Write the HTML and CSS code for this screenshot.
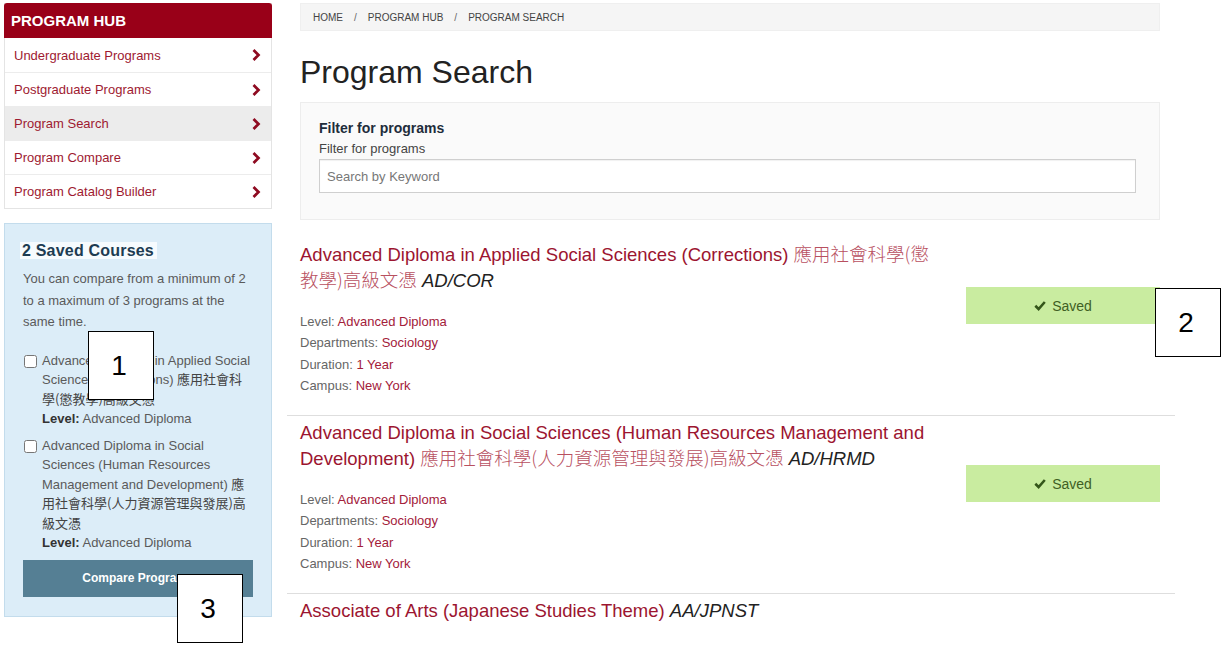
FILE: index.html
```html
<!DOCTYPE html>
<html lang="en">
<head>
<meta charset="utf-8">
<title>Program Search</title>
<link rel="stylesheet" href="styles.css">
</head>
<body>
<div class="page">
  <aside class="sidebar">
    <nav class="hub">
      <div class="hub-title">PROGRAM HUB</div>
      <a class="hub-link" href="#"><span>Undergraduate Programs</span><svg class="chev" viewBox="0 0 10 14" width="10" height="14"><path d="M2.5 2 L7.5 7 L2.5 12"/></svg></a>
      <a class="hub-link" href="#"><span>Postgraduate Programs</span><svg class="chev" viewBox="0 0 10 14" width="10" height="14"><path d="M2.5 2 L7.5 7 L2.5 12"/></svg></a>
      <a class="hub-link active" href="#"><span>Program Search</span><svg class="chev" viewBox="0 0 10 14" width="10" height="14"><path d="M2.5 2 L7.5 7 L2.5 12"/></svg></a>
      <a class="hub-link" href="#"><span>Program Compare</span><svg class="chev" viewBox="0 0 10 14" width="10" height="14"><path d="M2.5 2 L7.5 7 L2.5 12"/></svg></a>
      <a class="hub-link" href="#"><span>Program Catalog Builder</span><svg class="chev" viewBox="0 0 10 14" width="10" height="14"><path d="M2.5 2 L7.5 7 L2.5 12"/></svg></a>
    </nav>

    <section class="saved">
      <h3 class="saved-title"><span>2 Saved Courses</span></h3>
      <p class="saved-note">You can compare from a minimum of 2 to a maximum of 3 programs at the same time.</p>
      <label class="saved-item">
        <input type="checkbox">
        <span class="saved-text">Advanced Diploma in Applied Social Sciences (Corrections) <span class="zh">應用社會科學(懲教學)高級文憑</span>
          <span class="saved-level"><b>Level:</b> Advanced Diploma</span></span>
      </label>
      <label class="saved-item">
        <input type="checkbox">
        <span class="saved-text">Advanced Diploma in Social Sciences (Human Resources Management and Development) <span class="zh">應用社會科學(人力資源管理與發展)高級文憑</span>
          <span class="saved-level"><b>Level:</b> Advanced Diploma</span></span>
      </label>
      <button class="compare-btn" type="button">Compare Programs</button>
    </section>
  </aside>

  <main class="main">
    <div class="head">
      <div class="crumbs"><span>Home</span><span class="sep">/</span><span>Program Hub</span><span class="sep">/</span><span>Program Search</span></div>
      <h1 class="page-title">Program Search</h1>
      <div class="filter">
        <div class="filter-title">Filter for programs</div>
        <div class="filter-label">Filter for programs</div>
        <input class="filter-input" type="text" placeholder="Search by Keyword">
      </div>
    </div>

    <div class="results">
      <div class="result">
        <div class="result-body">
          <h2 class="result-title">Advanced Diploma in Applied Social Sciences (Corrections) <span class="zh-title">應用社會科學(懲教學)高級文憑</span> <i class="code">AD/COR</i></h2>
          <div class="meta">
            <div>Level: <span class="val">Advanced Diploma</span></div>
            <div>Departments: <span class="val">Sociology</span></div>
            <div>Duration: <span class="val">1 Year</span></div>
            <div>Campus: <span class="val">New York</span></div>
          </div>
        </div>
        <div class="result-side">
          <button class="saved-btn" type="button"><svg class="check" viewBox="0 0 12 11" width="12" height="11"><path d="M1.3 5.8 L4.6 9 L10.8 2"/></svg>Saved</button>
        </div>
      </div>

      <div class="result">
        <div class="result-body">
          <h2 class="result-title">Advanced Diploma in Social Sciences (Human Resources Management and Development) <span class="zh-title">應用社會科學(人力資源管理與發展)高級文憑</span> <i class="code">AD/HRMD</i></h2>
          <div class="meta">
            <div>Level: <span class="val">Advanced Diploma</span></div>
            <div>Departments: <span class="val">Sociology</span></div>
            <div>Duration: <span class="val">1 Year</span></div>
            <div>Campus: <span class="val">New York</span></div>
          </div>
        </div>
        <div class="result-side">
          <button class="saved-btn" type="button"><svg class="check" viewBox="0 0 12 11" width="12" height="11"><path d="M1.3 5.8 L4.6 9 L10.8 2"/></svg>Saved</button>
        </div>
      </div>

      <div class="result">
        <div class="result-body">
          <h2 class="result-title">Associate of Arts (Japanese Studies Theme) <i class="code">AA/JPNST</i></h2>
          <div class="meta">
            <div>Level: <span class="val">Associate Degree</span></div>
            <div>Departments: <span class="val">Japanese Studies</span></div>
            <div>Duration: <span class="val">2 Years</span></div>
            <div>Campus: <span class="val">New York</span></div>
          </div>
        </div>
        <div class="result-side"></div>
      </div>
    </div>
  </main>
</div>

<div class="callout callout-1">1</div>
<div class="callout callout-2">2</div>
<div class="callout callout-3">3</div>
</body>
</html>
```

FILE: styles.css
```css
* { box-sizing: border-box; }

html, body {
  margin: 0;
  padding: 0;
  background: #fff;
}

body {
  font-family: "Liberation Sans", Arial, "Noto Sans CJK TC", sans-serif;
  color: #333;
  position: relative;
  overflow: hidden;
  height: 647px;
}

.page {
  display: flex;
  align-items: flex-start;
  gap: 15px;
  padding: 3px 0 0 4px;
}

/* ---------- sidebar ---------- */
.sidebar {
  width: 268px;
  flex: none;
}

.hub {
  display: flex;
  flex-direction: column;
  border: 1px solid #e4e4e4;
  border-top: 0;
}

.hub-title {
  height: 35px;
  margin: 0 -1px;
  background: #990018;
  color: #fff;
  font-weight: bold;
  font-size: 15px;
  line-height: 35px;
  padding-left: 7px;
  border-radius: 3px 3px 0 0;
}

.hub-link {
  display: flex;
  align-items: center;
  justify-content: space-between;
  height: 34px;
  padding: 0 10px 0 9px;
  border-top: 1px solid #ececec;
  color: #9e1a31;
  text-decoration: none;
  font-size: 13px;
}

.hub-link:first-of-type { border-top: 0; }

.hub-link.active { background: #ececec; }

.chev {
  fill: none;
  stroke: #8e0a20;
  stroke-width: 2.7;
  stroke-linecap: butt;
  stroke-linejoin: miter;
}

.saved {
  margin-top: 14px;
  background: #dcedf8;
  border: 1px solid #c3dcec;
  padding: 17px 18px 19px 18px;
  display: flex;
  flex-direction: column;
}

.saved-title {
  margin: 0;
  font-size: 16px;
  line-height: 20px;
  font-weight: bold;
  color: #1d3c52;
  letter-spacing: 0.2px;
}

.saved-title span {
  background: #f6fbfe;
  padding: 0 3px 0 2px;
  margin-left: -3px;
}

.saved-note {
  margin: 7px 0 0;
  font-size: 13px;
  line-height: 21.5px;
  color: #5a5a5a;
}

.saved-item {
  display: flex;
  align-items: flex-start;
  gap: 5px;
  margin-top: 7px;
  font-size: 13px;
  line-height: 19.5px;
  color: #5a5a5a;
}

.saved-note + .saved-item { margin-top: 18px; }

.saved-item input {
  width: 13px;
  height: 13px;
  margin: 4px 0 0 1px;
  flex: none;
}

.saved-text {
  width: 209px;
}

.zh {
  font-family: "Noto Sans CJK TC", sans-serif;
  font-size: 13px;
  line-height: 1;
  color: #444;
}

.saved-level {
  display: block;
  color: #5a5a5a;
}

.saved-level b { color: #333; }

.compare-btn {
  margin-top: 7px;
  height: 37px;
  border: 0;
  background: #557f94;
  color: #fff;
  font-family: "Liberation Sans", Arial, sans-serif;
  font-weight: bold;
  font-size: 12px;
}

/* ---------- main ---------- */
.main {
  width: 888px;
  flex: none;
}

.head {
  padding: 0 15px 0 13px;
}

.crumbs {
  display: flex;
  align-items: center;
  height: 28px;
  background: #f5f5f5;
  border: 1px solid #efefef;
  padding-left: 12px;
  font-size: 10px;
  text-transform: uppercase;
  color: #444;
}

.crumbs .sep {
  padding: 0 11px;
  color: #666;
}

.page-title {
  margin: 24px 0 12px;
  font-size: 32px;
  line-height: 35px;
  font-weight: normal;
  color: #222;
}

.filter {
  background: #fafafa;
  border: 1px solid #ededed;
  padding: 15px 23px 26px 18px;
}

.filter-title {
  font-size: 14px;
  line-height: 20px;
  font-weight: bold;
  color: #1e2d3b;
}

.filter-label {
  margin-top: 2px;
  font-size: 13px;
  line-height: 18px;
  color: #444;
}

.filter-input {
  display: block;
  width: 100%;
  height: 34px;
  margin-top: 1px;
  border: 1px solid #cfcfcf;
  background: #fff;
  padding: 0 7px;
  font-family: "Liberation Sans", Arial, sans-serif;
  font-size: 13px;
  color: #333;
  box-shadow: inset 0 1px 1px rgba(0,0,0,0.06);
}

.filter-input::placeholder { color: #777; }

.results { margin-top: 18px; }

.result {
  display: flex;
  padding: 4px 15px 19px 13px;
  border-bottom: 1px solid #dedede;
}

.result-body { width: 640px; flex: none; }

.result-side {
  flex: 1;
  display: flex;
  justify-content: flex-end;
  align-items: flex-start;
  padding-top: 45px;
}

.result-title {
  margin: 0;
  font-size: 18.5px;
  line-height: 26px;
  font-weight: normal;
  color: #9c1530;
}

.zh-title {
  font-family: "Noto Sans CJK TC", sans-serif;
  font-weight: 300;
  line-height: 1;
  color: #b8505f;
}

.code { color: #222; }

.meta {
  margin-top: 17px;
  font-size: 13px;
  line-height: 21.3px;
  color: #666;
}

.meta .val { color: #a3203a; }

.saved-btn {
  width: 194px;
  height: 37px;
  border: 0;
  background: #c9eca0;
  color: #3f5f24;
  font-family: "Liberation Sans", Arial, sans-serif;
  font-size: 14px;
  display: flex;
  align-items: center;
  justify-content: center;
  gap: 6px;
}

.check {
  fill: none;
  stroke: #34561a;
  stroke-width: 2.6;
}

/* ---------- annotation callouts (overlay) ---------- */
.callout {
  position: absolute;
  width: 66px;
  height: 69px;
  background: #fff;
  border: 1.5px solid #000;
  display: flex;
  align-items: center;
  justify-content: center;
  font-family: "Liberation Sans", Arial, sans-serif;
  font-size: 28px;
  color: #000;
  padding-right: 4px;
}

.callout-1 { left: 88px; top: 331px; }
.callout-2 { left: 1155px; top: 288px; }
.callout-3 { left: 177px; top: 574px; }
```
